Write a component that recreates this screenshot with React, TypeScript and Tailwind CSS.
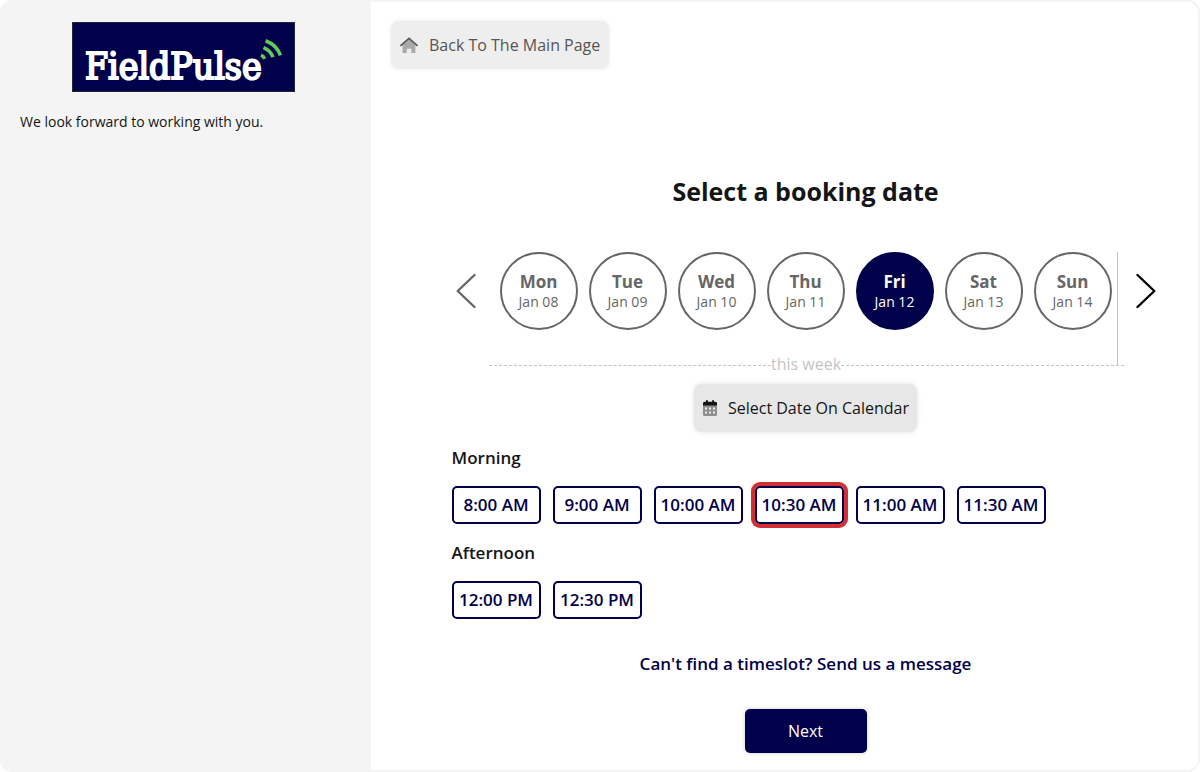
import { useState } from 'react';

interface Day {
  name: string;
  date: string;
}

interface SlotGroup {
  label: string;
  slots: string[];
}

const DAYS: Day[] = [
  { name: 'Mon', date: 'Jan 08' },
  { name: 'Tue', date: 'Jan 09' },
  { name: 'Wed', date: 'Jan 10' },
  { name: 'Thu', date: 'Jan 11' },
  { name: 'Fri', date: 'Jan 12' },
  { name: 'Sat', date: 'Jan 13' },
  { name: 'Sun', date: 'Jan 14' },
];

const SLOT_GROUPS: SlotGroup[] = [
  {
    label: 'Morning',
    slots: ['8:00 AM', '9:00 AM', '10:00 AM', '10:30 AM', '11:00 AM', '11:30 AM'],
  },
  { label: 'Afternoon', slots: ['12:00 PM', '12:30 PM'] },
];

function Logo() {
  return (
    <div className="flex h-[70px] w-[223px] items-center border border-[#22223a] bg-[#01004a] pl-3">
      <span className="mt-5 font-['DejaVu_Serif_Condensed','DejaVu_Serif',serif] text-[37px] leading-10 text-white [-webkit-text-stroke:2px_white]">
        FieldPulse
      </span>
      {/* signal waves */}
      <svg
        className="-ml-0.5 mb-3.5 h-6 w-6 shrink-0"
        viewBox="0 0 24 24"
        fill="none"
        stroke="#5fce55"
        strokeWidth="3.6"
        aria-hidden="true"
      >
        <path d="M5.6 2.700C12.500 5.300 18 10.500 20.500 17.300" />
        <path d="M3.500 9.600C8 11.300 11.300 14.600 13 19.200" />
        <path d="M1 17.200C2.600 17.900 3.900 19.200 4.600 20.900" />
      </svg>
    </div>
  );
}

function HomeIcon() {
  return (
    <svg className="h-[18px] w-[18px]" viewBox="0 0 18 18" aria-hidden="true">
      <path
        d="M9 3.2 15.4 9v7.2a.9.9 0 0 1-.9.9h-3.1v-4.3H6.8v4.3H3.5a.9.9 0 0 1-.9-.9V9Z"
        fill="#a9a9a9"
      />
      <path
        d="M1 9.4 9 2.3l8 7.1"
        fill="none"
        stroke="#5a5a5a"
        strokeWidth="1.8"
        strokeLinecap="round"
        strokeLinejoin="round"
      />
    </svg>
  );
}

function CalendarIcon() {
  return (
    <svg className="h-[18px] w-4" viewBox="0 0 16 18" aria-hidden="true">
      <path d="M1 6h14v9.500a1.500 1.500 0 0 1-1.500 1.500h-11A1.500 1.500 0 0 1 1 15.500Z" fill="#8e8e8e" />
      <path
        d="M1 6.500V4.300a1.500 1.500 0 0 1 1.500-1.500H4V1.300h1.900v1.500h4.200V1.300H12v1.500h1.500A1.500 1.500 0 0 1 15 4.300V6.500Z"
        fill="#151515"
      />
      <path
        d="M3 8.500h2v2H3zM7 8.500h2v2H7zM11 8.500h2v2h-2zM3 12.500h2v2H3zM7 12.500h2v2H7zM11 12.500h2v2h-2z"
        fill="#ececec"
      />
    </svg>
  );
}

export default function App() {
  const [day, setDay] = useState('Jan 12');
  const [slot, setSlot] = useState('10:30 AM');

  return (
    <div className="flex min-h-screen overflow-hidden rounded-xl border-2 border-[#f4f4f4] bg-white font-['Open_Sans',sans-serif] text-base text-[#151515]">
      <aside className="w-[369px] shrink-0 bg-[#f4f4f4] px-[18px] pt-5">
        <div className="flex justify-center pr-1.5">
          <Logo />
        </div>
        <p className="mt-5 text-sm leading-5">We look forward to working with you.</p>
      </aside>

      <main className="min-w-0 flex-1 pt-[18px] pl-5">
        <a
          href="#main"
          className="mt-px inline-flex h-12 items-center gap-[11px] rounded-lg bg-[#eeeeee] px-[9px] text-[#555] shadow-[0_0_5px_rgba(0,0,0,0.08)]"
        >
          <HomeIcon />
          Back To The Main Page
        </a>

        <div className="pr-0.5 pl-6">
          <div className="mx-auto flex max-w-[708px] flex-col items-center">
            <h1 className="mt-[106px] text-[25px] leading-8 font-bold">Select a booking date</h1>

            {/* Week picker */}
            <div className="mt-[45px] flex w-full items-start">
              <button
                type="button"
                aria-label="Previous week"
                className="flex h-[78px] w-[37px] shrink-0 items-center pl-1 text-[#666]"
              >
                <svg className="h-9 w-5" viewBox="0 0 20 36" fill="none" stroke="currentColor" strokeWidth="2.4" strokeLinecap="round" strokeLinejoin="round">
                  <path d="M18.500 2 1.700 18l16.800 16" />
                </svg>
              </button>
              <div className="flex-1">
                <div className="mr-1.5 flex h-[113px] items-start justify-between border-r border-[#c4c4c4] pr-[5px] pl-[11px]">
                  {DAYS.map((d) => (
                    <button
                      key={d.date}
                      type="button"
                      aria-pressed={d.date === day}
                      onClick={() => setDay(d.date)}
                      className={
                        d.date === day
                          ? 'flex size-[78px] flex-col items-center justify-center rounded-full border-2 border-[#01004a] bg-[#01004a] pt-0.5 text-white'
                          : 'flex size-[78px] flex-col items-center justify-center rounded-full border-2 border-[#666] pt-0.5 text-[#666]'
                      }
                    >
                      <span className="text-[17px] leading-5 font-bold">{d.name}</span>
                      <span className="text-sm leading-5">{d.date}</span>
                    </button>
                  ))}
                </div>
                <div className="-mt-3 flex h-6 items-center text-[#c4c4c4]">
                  <span className="flex-1 border-t border-dashed border-[#c4c4c4]" />
                  <span className="pb-0.5 leading-5">this week</span>
                  <span className="flex-1 border-t border-dashed border-[#c4c4c4]" />
                </div>
              </div>
              <button
                type="button"
                aria-label="Next week"
                className="flex h-[78px] w-9 shrink-0 items-center justify-end pr-1 text-black"
              >
                <svg className="h-9 w-5" viewBox="0 0 20 36" fill="none" stroke="currentColor" strokeWidth="2.4" strokeLinecap="round" strokeLinejoin="round">
                  <path d="m1.500 2 16.800 16L1.500 34" />
                </svg>
              </button>
            </div>

            <button
              type="button"
              className="mt-[7px] flex h-12 items-center gap-2.5 rounded-lg bg-[#e7e7e7] px-2 shadow-[0_0_5px_rgba(0,0,0,0.12)]"
            >
              <CalendarIcon />
              Select Date On Calendar
            </button>

            <div className="mt-[14px] w-full">
              {SLOT_GROUPS.map((group) => (
                <section key={group.label} className="mb-[17px]">
                  <h2 className="text-[17px] leading-6 font-semibold">{group.label}</h2>
                  <div className="mt-4 flex flex-wrap gap-3">
                    {group.slots.map((s) => (
                      <button
                        key={s}
                        type="button"
                        aria-pressed={s === slot}
                        onClick={() => setSlot(s)}
                        className={
                          s === slot
                            ? 'h-[38px] w-[89px] rounded-[5px] border-2 border-[#01004a] text-[17px] font-semibold whitespace-nowrap text-[#01004a] ring-4 ring-[#d32f35]'
                            : 'h-[38px] w-[89px] rounded-[5px] border-2 border-[#01004a] text-[17px] font-semibold whitespace-nowrap text-[#01004a]'
                        }
                      >
                        {s}
                      </button>
                    ))}
                  </div>
                </section>
              ))}
            </div>

            <a href="#message" className="mt-4 text-[17px] leading-6 font-semibold text-[#01004a]">
              Can't find a timeslot? Send us a message
            </a>
            <button
              type="button"
              className="mt-[33px] h-11 w-[122px] rounded-[5px] bg-[#01004a] text-white shadow-[0_0_4px_rgba(0,0,0,0.2)]"
            >
              Next
            </button>
          </div>
        </div>
      </main>
    </div>
  );
}
